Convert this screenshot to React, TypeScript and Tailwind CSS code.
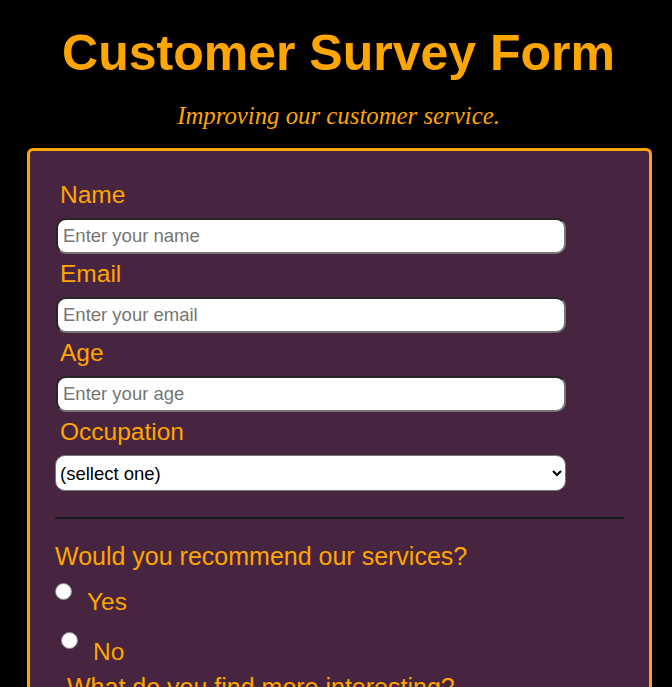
import React from 'react'

const sans = "font-['Liberation_Sans',Arial,sans-serif]"

function TextField({ label, placeholder, type = 'text' }: { label: string; placeholder: string; type?: string }) {
  return (
    <div>
      <label className="ml-[5px] block text-[24.5px] leading-[28px] text-[#ffa500]">{label}</label>
      <input
        type={type}
        placeholder={placeholder}
        className="mt-[9px] mb-[6px] ml-[1px] block h-[36px] w-[510px] rounded-[10px] border-2 border-t-[#262626] border-l-[#262626] border-b-[#767676] border-r-[#767676] bg-white pl-[5px] text-[18.5px] text-black outline-none placeholder:text-[#757575]"
      />
    </div>
  )
}

function Radio({ label, name, className }: { label: string; name: string; className?: string }) {
  return (
    <label className={'flex items-start ' + (className ?? '')}>
      <input
        type="radio"
        name={name}
        className="m-0 h-[17px] w-[17px] shrink-0 appearance-none rounded-full border border-[#8a8a8a] bg-white"
      />
      <span className="text-[24.5px] leading-[28px] text-[#ffa500]">{label}</span>
    </label>
  )
}

export default function App() {
  return (
    <div className={`min-h-screen bg-black pb-10 ${sans}`}>
      <header className="pl-[5px] text-center">
        <h1 className="pt-[24px] text-[50px] font-bold leading-[58px] text-[#ffa500]">Customer Survey Form</h1>
        <p className="mt-[19px] font-['Liberation_Serif','Times_New_Roman',serif] text-[24.8px] italic leading-[29px] text-[#ffa500]">
          Improving our customer service.
        </p>
      </header>

      <form className="mt-[18px] ml-[27px] w-[625px] rounded-[6px] border-[3px] border-[#ffa500] bg-[#472541] pt-[30px] pb-10 pl-[25px] pr-[25px]">
        <TextField label="Name" placeholder="Enter your name" />
        <TextField label="Email" placeholder="Enter your email" type="email" />
        <TextField label="Age" placeholder="Enter your age" type="number" />
        <div>
          <label className="ml-[5px] block text-[24.5px] leading-[28px] text-[#ffa500]">Occupation</label>
          <select className="mt-[9px] block h-[36px] w-[511px] rounded-[10px] border border-[#767676] bg-white text-[18.5px] text-black">
            <option>(sellect one)</option>
            <option>Student</option>
            <option>Full-time job</option>
            <option>Part-time job</option>
            <option>Other</option>
          </select>
        </div>

        <hr className="mt-[26px] h-[2px] w-[569px] border-0 bg-[#1c1a1c]" />

        <p className="mt-[23px] text-[25px] leading-[29px] text-[#ffa500]">Would you recommend our services?</p>
        <Radio label="Yes" name="recommend" className="mt-[12px] gap-[15px] [&>span]:mt-[5px]" />
        <Radio label="No" name="recommend" className="mt-[16px] ml-[6px] gap-[15px] [&>span]:mt-[6px]" />

        <p className="mt-[7px] ml-[12px] text-[25px] leading-[28px] text-[#ffa500]">What do you find more interesting?</p>
        <div className="mt-3 flex flex-col gap-2 text-[20px] text-[#ffa500]">
          <label className="flex items-center gap-3">
            <input type="checkbox" className="h-4 w-4" /> Products
          </label>
          <label className="flex items-center gap-3">
            <input type="checkbox" className="h-4 w-4" /> Customer service
          </label>
          <label className="flex items-center gap-3">
            <input type="checkbox" className="h-4 w-4" /> Delivery
          </label>
        </div>
      </form>
    </div>
  )
}
